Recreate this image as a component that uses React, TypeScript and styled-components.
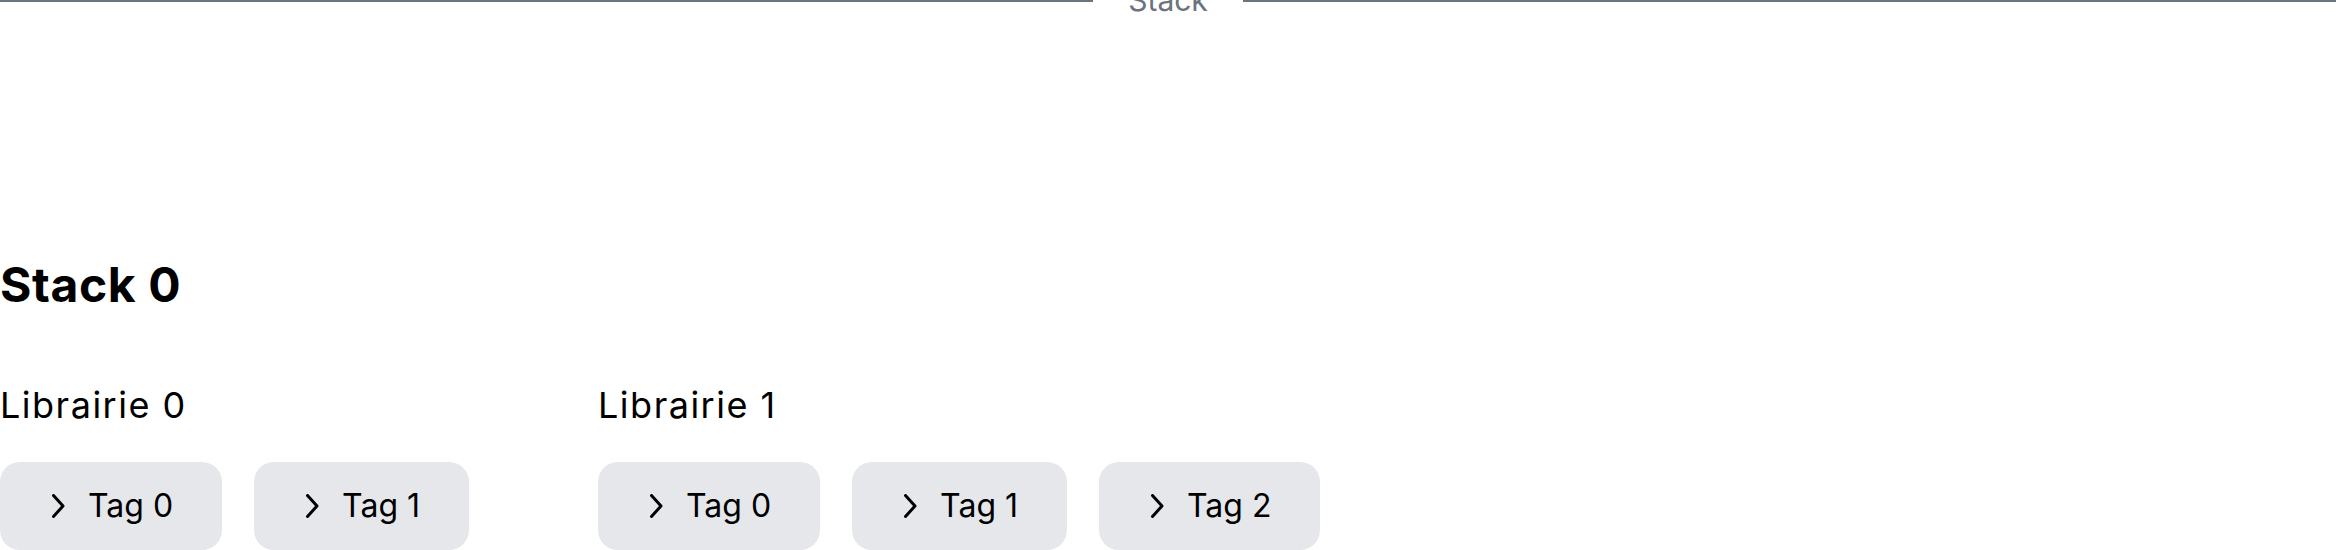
import * as React from 'react';
import styled, { createGlobalStyle } from 'styled-components';

const GlobalStyle = createGlobalStyle`
  html, body {
    margin: 0;
    padding: 0;
    background: #fff;
  }
  body {
    font-family: Inter, "Noto Sans", sans-serif;
    color: #000;
    overflow: hidden;
  }
`;

interface ILibrary {
  name: string;
  tags: string[];
}

const libraries: ILibrary[] = [
  { name: 'Librairie 0', tags: ['Tag 0', 'Tag 1'] },
  { name: 'Librairie 1', tags: ['Tag 0', 'Tag 1', 'Tag 2'] },
];

const Page = styled.div`
  width: 2336px;
`;

// the page is scrolled a little: the divider sits half above the top edge
const Divider = styled.div`
  display: flex;
  align-items: center;
  margin-top: -22px;
`;

const Rule = styled.div`
  flex: 1;
  height: 2px;
  background-color: #6b7280;
`;

const DividerLabel = styled.span`
  padding: 0 35px;
  font-size: 30px;
  line-height: 45px;
  color: #6b7280;
`;

const StackSection = styled.section`
  margin-top: 232px;
`;

const StackTitle = styled.h2`
  margin: 0;
  font-size: 48px;
  font-weight: 700;
  line-height: 60px;
  letter-spacing: 0.6px;
`;

const Libraries = styled.div`
  display: flex;
  gap: 129px;
  margin-top: 63px;
`;

const Library = styled.div`
  display: flex;
  flex-direction: column;
  gap: 30px;
`;

const LibraryName = styled.h3`
  margin: 0;
  font-size: 36px;
  font-weight: 400;
  line-height: 54px;
  letter-spacing: 1.5px;
`;

const TagList = styled.div`
  display: flex;
  gap: 32px;
`;

const Tag = styled.button`
  display: flex;
  align-items: center;
  gap: 23px;
  padding: 24px 49px;
  border: none;
  border-radius: 20px;
  background-color: #e5e7eb;
  color: #000;
  font-family: Inter, "Noto Sans", sans-serif;
  font-size: 32px;
  line-height: 40px;
`;

const Chevron = () => (
  <svg width="16" height="24" viewBox="0 0 16 24" fill="none">
    <polyline
      points="4.5,1.5 14,12 4.5,22.5"
      stroke="#000"
      strokeWidth="3"
      strokeLinecap="round"
      strokeLinejoin="round"
    />
  </svg>
);

const App = () => (
  <Page>
    <GlobalStyle />
    <Divider>
      <Rule />
      <DividerLabel>Stack</DividerLabel>
      <Rule />
    </Divider>
    <StackSection>
      <StackTitle>Stack 0</StackTitle>
      <Libraries>
        {libraries.map(lib => (
          <Library key={lib.name}>
            <LibraryName>{lib.name}</LibraryName>
            <TagList>
              {lib.tags.map(tag => (
                <Tag key={tag}>
                  <Chevron />
                  {tag}
                </Tag>
              ))}
            </TagList>
          </Library>
        ))}
      </Libraries>
    </StackSection>
  </Page>
);

export default App;
